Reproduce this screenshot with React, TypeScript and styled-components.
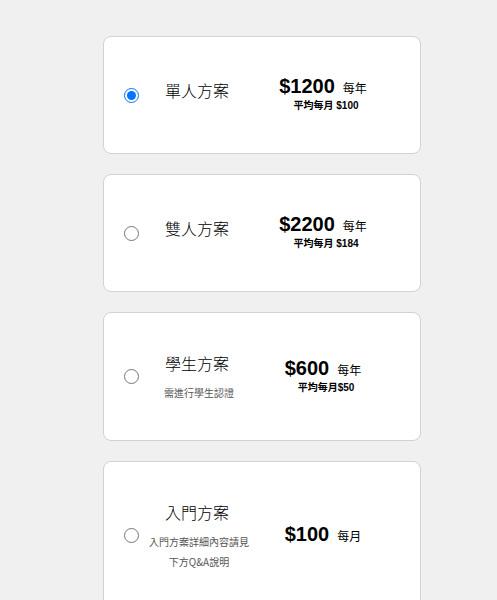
import React from "react";
import styled, { createGlobalStyle } from "styled-components";

const GlobalStyle = createGlobalStyle`
  body {
    margin: 0;
    background: #f0f0f0;
    font-family: "Noto Sans CJK TC", "Liberation Sans", sans-serif;
  }
`;

const List = styled.div`
  display: flex;
  flex-direction: column;
  gap: 20px;
  padding: 36px 0 0 103px;
`;

const Card = styled.label`
  display: flex;
  align-items: center;
  box-sizing: border-box;
  width: 318px;
  padding: 36px 0 36px 20px;
  background: #fff;
  border: 1px solid #d2d2d2;
  border-radius: 8px;
  cursor: pointer;
`;

const Radio = styled.input`
  width: 15px;
  height: 15px;
  margin: 0;
  flex-shrink: 0;
  accent-color: #0075ff;
`;

const TextCol = styled.div<{ $hasNotes: boolean }>`
  width: 110px;
  margin-left: 5px;
  padding: ${(p) => (p.$hasNotes ? "2px 0 1px" : "0 0 10px")};
  display: flex;
  flex-direction: column;
  align-items: center;
  text-align: center;
`;

const Title = styled.div`
  margin-right: 4px;
  font-size: 16px;
  font-weight: 300;
  line-height: 24px;
  color: #000;
`;

const Note = styled.div`
  margin-top: 8px;
  font-size: 10px;
  line-height: 20px;
  color: #555;
  white-space: nowrap;
`;

const PriceCol = styled.div`
  width: 130px;
  margin-left: 4px;
  padding-bottom: 4px;
  display: flex;
  flex-direction: column;
  align-items: center;
  color: #000;
`;

const PriceRow = styled.div`
  display: flex;
  align-items: baseline;
  gap: 8px;
`;

const Amount = styled.span`
  font-family: "Liberation Sans", Arial, sans-serif;
  font-weight: 700;
  font-size: 20px;
  line-height: 26px;
`;

const Period = styled.span`
  font-size: 12px;
`;

const Monthly = styled.div`
  margin-left: 6px;
  font-family: "Liberation Sans", "Noto Sans CJK TC", sans-serif;
  font-weight: 700;
  font-size: 10px;
  line-height: 14px;
`;

type Plan = {
  title: string;
  notes?: string[];
  price: string;
  period: string;
  monthly?: string;
  checked?: boolean;
};

const plans: Plan[] = [
  { title: "單人方案", price: "$1200", period: "每年", monthly: "平均每月 $100", checked: true },
  { title: "雙人方案", price: "$2200", period: "每年", monthly: "平均每月 $184" },
  { title: "學生方案", notes: ["需進行學生認證"], price: "$600", period: "每年", monthly: "平均每月$50" },
  {
    title: "入門方案",
    notes: ["入門方案詳細內容請見", "下方Q&A說明"],
    price: "$100",
    period: "每月",
  },
];

export default function App() {
  return (
    <>
      <GlobalStyle />
      <List>
        {plans.map((p) => (
          <Card key={p.title}>
            <Radio type="radio" name="plan" defaultChecked={p.checked} />
            <TextCol $hasNotes={!!p.notes}>
              <Title>{p.title}</Title>
              {p.notes && (
                <Note>
                  {p.notes.map((n) => (
                    <div key={n}>{n}</div>
                  ))}
                </Note>
              )}
            </TextCol>
            <PriceCol>
              <PriceRow>
                <Amount>{p.price}</Amount>
                <Period>{p.period}</Period>
              </PriceRow>
              {p.monthly && <Monthly>{p.monthly}</Monthly>}
            </PriceCol>
          </Card>
        ))}
      </List>
    </>
  );
}
